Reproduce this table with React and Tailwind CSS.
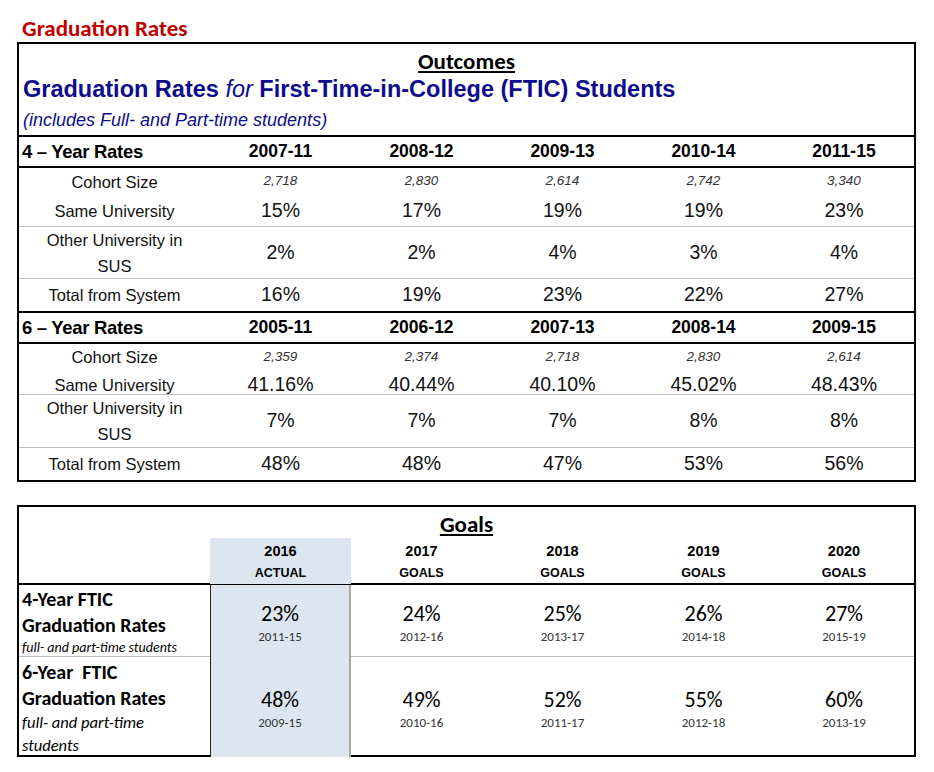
import React from "react";

const arial = "font-['Liberation_Sans',Arial,sans-serif]";
const calibri = "font-['Carlito',Calibri,'Lato',sans-serif]";
const cols = "grid grid-cols-[191px_141px_141px_141px_141px_140px]";

const outcomes = [
  {
    title: "4 – Year Rates",
    years: ["2007-11", "2008-12", "2009-13", "2010-14", "2011-15"],
    cohort: ["2,718", "2,830", "2,614", "2,742", "3,340"],
    same: ["15%", "17%", "19%", "19%", "23%"],
    other: ["2%", "2%", "4%", "3%", "4%"],
    total: ["16%", "19%", "23%", "22%", "27%"],
    h: { cohort: "h-[27px]", same: "h-[32px]", other: "h-[52px]", total: "h-[34px]" },
  },
  {
    title: "6 – Year Rates",
    years: ["2005-11", "2006-12", "2007-13", "2008-14", "2009-15"],
    cohort: ["2,359", "2,374", "2,718", "2,830", "2,614"],
    same: ["41.16%", "40.44%", "40.10%", "45.02%", "48.43%"],
    other: ["7%", "7%", "7%", "8%", "8%"],
    total: ["48%", "48%", "47%", "53%", "56%"],
    h: { cohort: "h-[26px]", same: "h-[25px]", other: "h-[53px]", total: "h-[32px]" },
  },
];

const goals = [
  { year: "2016", kind: "ACTUAL" },
  { year: "2017", kind: "GOALS" },
  { year: "2018", kind: "GOALS" },
  { year: "2019", kind: "GOALS" },
  { year: "2020", kind: "GOALS" },
];

const goalRows = [
  { values: ["23%", "24%", "25%", "26%", "27%"], spans: ["2011-15", "2012-16", "2013-17", "2014-18", "2015-19"] },
  { values: ["48%", "49%", "52%", "55%", "60%"], spans: ["2009-15", "2010-16", "2011-17", "2012-18", "2013-19"] },
];

function Cell({ children, className = "" }) {
  return <div className={`flex items-center justify-center text-center ${className}`}>{children}</div>;
}

function ValueRow({ label, values, h, last, valueCls }) {
  return (
    <div className={`${cols} ${h} ${last || ""}`}>
      <Cell className={`${arial} text-[16.5px] leading-[26px] text-[#111]`}>{label}</Cell>
      {values.map((v, i) => (
        <Cell key={i} className={`${arial} ${valueCls}`}>
          {v}
        </Cell>
      ))}
    </div>
  );
}

function Section({ data, isLast }) {
  return (
    <div>
      <div className={`${cols} h-[31px] border-b-2 border-black`}>
        <div className={`${arial} font-bold text-[18.5px] leading-[29px] pl-[3px] text-black tracking-[-0.3px]`}>
          {data.title}
        </div>
        {data.years.map((y) => (
          <Cell key={y} className={`${arial} font-bold text-[17.5px] text-black`}>
            {y}
          </Cell>
        ))}
      </div>
      <ValueRow
        label="Cohort Size"
        values={data.cohort}
        h={data.h.cohort}
        valueCls="italic text-[13.5px] text-[#333]"
      />
      <ValueRow
        label="Same University"
        values={data.same}
        h={data.h.same}
        last="border-b border-[#bfbfbf]"
        valueCls="text-[19.5px] text-[#111]"
      />
      <ValueRow
        label={
          <span>
            Other University in
            <br />
            SUS
          </span>
        }
        values={data.other}
        h={data.h.other}
        last="border-b border-[#bfbfbf]"
        valueCls="text-[19.5px] text-[#111]"
      />
      <ValueRow
        label="Total from System"
        values={data.total}
        h={data.h.total}
        last={isLast ? "" : "border-b-2 border-black"}
        valueCls="text-[19.5px] text-[#111]"
      />
    </div>
  );
}

export default function App() {
  return (
    <div className="w-[934px] h-[772px] bg-white pt-[15px] pl-[17px]">
      <div className={`${calibri} font-bold text-[23px] leading-[27px] text-[#c00000] pl-[5px]`}>
        Graduation Rates
      </div>

      {/* Outcomes */}
      <div className="w-[899px] border-2 border-black">
        <div className="h-[93px] border-b-2 border-black">
          <div className="h-[32px] pt-[2px] flex items-center justify-center">
            <span className={`${calibri} font-bold text-[23px] underline underline-offset-2 text-black`}>
              Outcomes
            </span>
          </div>
          <div className={`${arial} h-[27px] leading-[27px] pl-[4px] text-[23.5px] text-[#0c0c8c] font-bold`}>
            Graduation Rates <span className="italic font-normal">for</span> First-Time-in-College (FTIC) Students
          </div>
          <div className={`${arial} h-[32px] pt-[3px] leading-[28px] pl-[4px] text-[18px] italic text-[#0c0c8c]`}>
            (includes Full- and Part-time students)
          </div>
        </div>
        {outcomes.map((d, i) => (
          <Section key={d.title} data={d} isLast={i === outcomes.length - 1} />
        ))}
      </div>

      {/* Goals */}
      <div className="mt-[23px] w-[899px] border-2 border-black">
        <div className="h-[31px] pt-[4px] flex items-center justify-center">
          <span className={`${calibri} font-bold text-[23px] underline underline-offset-2 text-black`}>Goals</span>
        </div>
        <div className={`${cols} h-[47px] border-b-2 border-black`}>
          <div />
          {goals.map((g, i) => (
            <div
              key={g.year}
              className={`flex flex-col items-center pt-[2px] ${arial} font-bold text-black ${
                i === 0 ? "bg-[#dce6f1]" : ""
              }`}
            >
              <span className="text-[14.5px] leading-[22px]">{g.year}</span>
              <span className="text-[12.5px] leading-[22px]">{g.kind}</span>
            </div>
          ))}
        </div>

        <div className={`${cols} h-[72px] border-b border-[#bfbfbf]`}>
          <div className={`${calibri} pl-[3px] text-black`}>
            <div className="font-bold text-[20px] leading-[26px] pt-[1px]">4-Year FTIC</div>
            <div className="font-bold text-[20px] leading-[26px]">Graduation Rates</div>
            <div className="italic text-[14px] leading-[20px] whitespace-nowrap">full- and part-time students</div>
          </div>
          {goalRows[0].values.map((v, i) => (
            <div
              key={i}
              className={`flex flex-col items-center pt-[16px] ${calibri} ${
                i === 0 ? "bg-[#dce6f1] border-l border-[#222] border-r-2 border-r-[#a6a6a6]" : ""
              }`}
            >
              <span className="text-[22px] leading-[26px] text-black">{v}</span>
              <span className="text-[13px] leading-[20px] text-[#333]">{goalRows[0].spans[i]}</span>
            </div>
          ))}
        </div>

        <div className={`${cols} h-[98px]`}>
          <div className={`${calibri} pl-[3px] text-black`}>
            <div className="font-bold text-[20px] leading-[26px] pt-[2px] whitespace-pre">6-Year  FTIC</div>
            <div className="font-bold text-[20px] leading-[26px]">Graduation Rates</div>
            <div className="italic text-[16.5px] leading-[23px]">full- and part-time</div>
            <div className="italic text-[16.5px] leading-[23px]">students</div>
          </div>
          {goalRows[1].values.map((v, i) => (
            <div
              key={i}
              className={`flex flex-col items-center pt-[30px] ${calibri} ${
                i === 0 ? "bg-[#dce6f1] border-l border-[#222] border-r-2 border-r-[#a6a6a6]" : ""
              }`}
            >
              <span className="text-[22px] leading-[26px] text-black">{v}</span>
              <span className="text-[13px] leading-[20px] text-[#333]">{goalRows[1].spans[i]}</span>
            </div>
          ))}
        </div>
      </div>
    </div>
  );
}
